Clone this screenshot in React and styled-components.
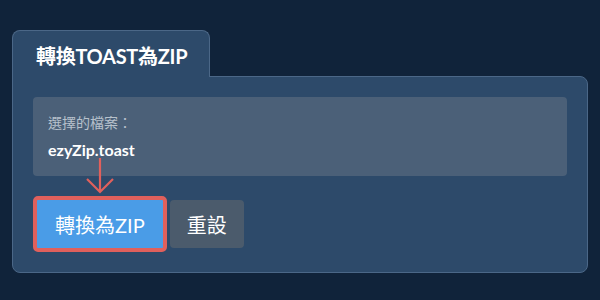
import React from 'react';
import styled, { createGlobalStyle } from 'styled-components';

const GlobalStyle = createGlobalStyle`
  html, body {
    margin: 0;
    padding: 0;
    background: #10233a;
    font-family: "Lato", "Noto Sans CJK TC", sans-serif;
    color: #ffffff;
  }
`;

const Page = styled.div`
  width: 600px;
  height: 300px;
  box-sizing: border-box;
  padding: 30px 12px 0 12px;
`;

const Tab = styled.div`
  display: inline-flex;
  align-items: center;
  box-sizing: border-box;
  height: 47px;
  width: 198px;
  padding: 3px 0 0 23px;
  background: #2d4a6a;
  border: 1px solid #4b6787;
  border-bottom: none;
  border-radius: 8px 8px 0 0;
  position: relative;
  z-index: 1;
  margin-bottom: -1px;
`;

const TabTitle = styled.h2`
  margin: 0;
  font-size: 20px;
  font-weight: 700;
  letter-spacing: -0.3px;
`;

const Panel = styled.div`
  position: relative;
  box-sizing: border-box;
  background: #2d4a6a;
  border: 1px solid #4b6787;
  border-radius: 0 8px 8px 8px;
  padding: 20px;
  height: 197px;
`;

const FileBox = styled.div`
  box-sizing: border-box;
  height: 79px;
  background: #4b6078;
  border-radius: 4px;
  padding: 16px 15px 0 15px;
`;

const Label = styled.div`
  font-size: 14px;
  color: #b7c1cc;
  line-height: 20px;
`;

const FileName = styled.div`
  margin-top: 7px;
  font-size: 16px;
  font-weight: 700;
  line-height: 20px;
`;

const Actions = styled.div`
  display: flex;
  align-items: center;
  gap: 3px;
  margin-top: 20px;
`;

const Button = styled.button`
  box-sizing: border-box;
  height: ${({ highlighted }) => (highlighted ? '56px' : '48px')};
  padding: 0 ${({ highlighted }) => (highlighted ? '18px' : '17px')};
  border: ${({ highlighted }) => (highlighted ? '4px solid #e0605c' : 'none')};
  border-radius: ${({ highlighted }) => (highlighted ? '5px' : '4px')};
  background: ${({ primary }) => (primary ? '#4a9ce7' : '#4b5b6c')};
  color: #ffffff;
  font-family: "Lato", "Noto Sans CJK TC", sans-serif;
  font-size: 20px;
  font-weight: 400;
  cursor: pointer;
`;

const Pointer = styled.svg`
  position: absolute;
  left: 72px;
  top: 81px;
`;

export default function App() {
  return (
    <>
      <GlobalStyle />
      <Page>
        <Tab>
          <TabTitle>轉換TOAST為ZIP</TabTitle>
        </Tab>
        <Panel>
          <FileBox>
            <Label>選擇的檔案：</Label>
            <FileName>ezyZip.toast</FileName>
          </FileBox>
          <Actions>
            <Button primary highlighted>轉換為ZIP</Button>
            <Button>重設</Button>
          </Actions>
          <Pointer width="30" height="36" viewBox="0 0 30 36">
            <path d="M15 0 V34 M2 21 L15 34 L28 21" fill="none" stroke="#e0605c" strokeWidth="2.2" />
          </Pointer>
        </Panel>
      </Page>
    </>
  );
}
